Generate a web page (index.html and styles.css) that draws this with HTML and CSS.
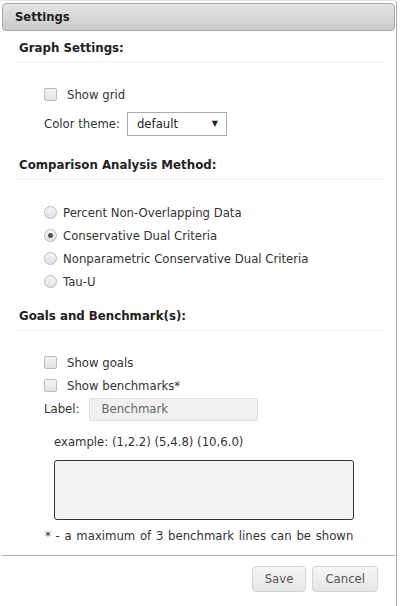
FILE: index.html
```html
<!DOCTYPE html>
<html>
<head>
<meta charset="utf-8">
<link rel="stylesheet" href="styles.css">
</head>
<body>
<div class="dialog">
  <div class="titlebar"><span class="title">Settings</span></div>
  <div class="content">
    <h3 class="section-title">Graph Settings:</h3>
    <div class="section-body">
      <label class="row check-row"><span class="checkbox"></span><span>Show grid</span></label>
      <div class="row theme-row">
        <span>Color theme:</span>
        <span class="select"><span>default</span><span class="arrow">▼</span></span>
      </div>
    </div>

    <h3 class="section-title">Comparison Analysis Method:</h3>
    <div class="section-body radios">
      <label class="row radio-row"><span class="radio"></span><span>Percent Non-Overlapping Data</span></label>
      <label class="row radio-row"><span class="radio checked"></span><span>Conservative Dual Criteria</span></label>
      <label class="row radio-row"><span class="radio"></span><span>Nonparametric Conservative Dual Criteria</span></label>
      <label class="row radio-row"><span class="radio"></span><span>Tau-U</span></label>
    </div>

    <h3 class="section-title">Goals and Benchmark(s):</h3>
    <div class="section-body">
      <label class="row check-row"><span class="checkbox"></span><span>Show goals</span></label>
      <label class="row check-row"><span class="checkbox"></span><span>Show benchmarks*</span></label>
      <div class="row label-row">
        <span>Label:</span>
        <span class="text-input">Benchmark</span>
      </div>
      <div class="example">example: (1,2.2) (5,4.8) (10,6.0)</div>
      <div class="textarea"></div>
      <div class="note">* - a maximum of 3 benchmark lines can be shown</div>
    </div>
  </div>
  <div class="buttonpane">
    <button class="btn">Save</button>
    <button class="btn">Cancel</button>
  </div>
</div>
</body>
</html>
```

FILE: styles.css
```css
html, body {
  margin: 0;
  padding: 0;
  background: #fff;
}
body {
  font-family: "DejaVu Sans", Verdana, sans-serif;
  font-size: 11.7px;
  line-height: 14px;
  color: #333;
  width: 400px;
  height: 606px;
  overflow: hidden;
}
.dialog {
  width: 397px;
  height: 606px;
  border-right: 1px solid #aaa;
  border-top: 1px solid #e4e4e4;
  border-top-right-radius: 4px;
  box-sizing: border-box;
  padding: 2px 0 0 2px;
  display: flex;
  flex-direction: column;
}
.titlebar {
  flex-shrink: 0;
  height: 28px;
  margin-right: 1px;
  border: 1px solid #aaa;
  border-radius: 4px;
  background: linear-gradient(#e3e3e3, #cbcbcb);
  box-sizing: border-box;
  display: flex;
  align-items: center;
  padding-left: 12px;
}
.title {
  font-weight: bold;
  font-size: 11.6px;
  color: #222;
}
.content {
  padding: 0 10px 0 12px;
  flex: 1;
}
.section-title {
  margin: 0;
  font-size: 11.8px;
  line-height: 14px;
  font-weight: bold;
  color: #222;
  padding: 10px 0 7px 5px;
  border-bottom: 1px solid #eee;
}
.section-body {
  padding: 20px 0 6px 30px;
}
.radios {
  padding-top: 21px;
}
.row {
  display: flex;
  align-items: center;
  height: 23px;
}
.checkbox {
  width: 11px;
  height: 11px;
  border: 1px solid #bbb;
  border-radius: 2px;
  background: linear-gradient(#f4f4f4, #e2e2e2);
  margin-right: 10px;
}
.radio {
  width: 11px;
  height: 11px;
  border: 1px solid #bbb;
  border-radius: 50%;
  background: linear-gradient(#f4f4f4, #e2e2e2);
  margin-right: 6px;
  position: relative;
}
.radio.checked::after {
  content: "";
  position: absolute;
  left: 3px;
  top: 3px;
  width: 5px;
  height: 5px;
  border-radius: 50%;
  background: #555;
}
.theme-row {
  height: 36px;
}
.select {
  margin-left: 7px;
  width: 100px;
  height: 24px;
  box-sizing: border-box;
  border: 1px solid #aaa;
  display: flex;
  align-items: center;
  justify-content: space-between;
  padding: 0 8px 0 9px;
  color: #222;
}
.arrow {
  font-size: 8px;
}
.label-row {
  height: 24px;
}
.text-input {
  margin-left: 10px;
  width: 169px;
  height: 23px;
  box-sizing: border-box;
  border: 1px solid #ddd;
  border-radius: 2px;
  background: #f0f0f0;
  color: #666;
  display: flex;
  align-items: center;
  padding-left: 11px;
}
.example {
  margin: 14px 0 0 10px;
}
.textarea {
  margin: 11px 0 0 10px;
  width: 300px;
  height: 60px;
  box-sizing: border-box;
  border: 1px solid #333;
  border-radius: 3px;
  background: #f2f2f2;
}
.note {
  margin: 9px 0 0 1px;
  word-spacing: 1px;
}
.buttonpane {
  flex-shrink: 0;
  box-sizing: border-box;
  border-top: 1px solid #aaa;
  margin-right: 1px;
  display: flex;
  justify-content: flex-end;
  gap: 6px;
  padding: 10px 17px 0 0;
  height: 51px;
}
.btn {
  font-family: inherit;
  font-size: 11.7px;
  color: #555;
  height: 26px;
  padding: 0 12px;
  border: 1px solid #d3d3d3;
  border-radius: 4px;
  background: linear-gradient(#f6f6f6, #e6e6e6);
}
```
